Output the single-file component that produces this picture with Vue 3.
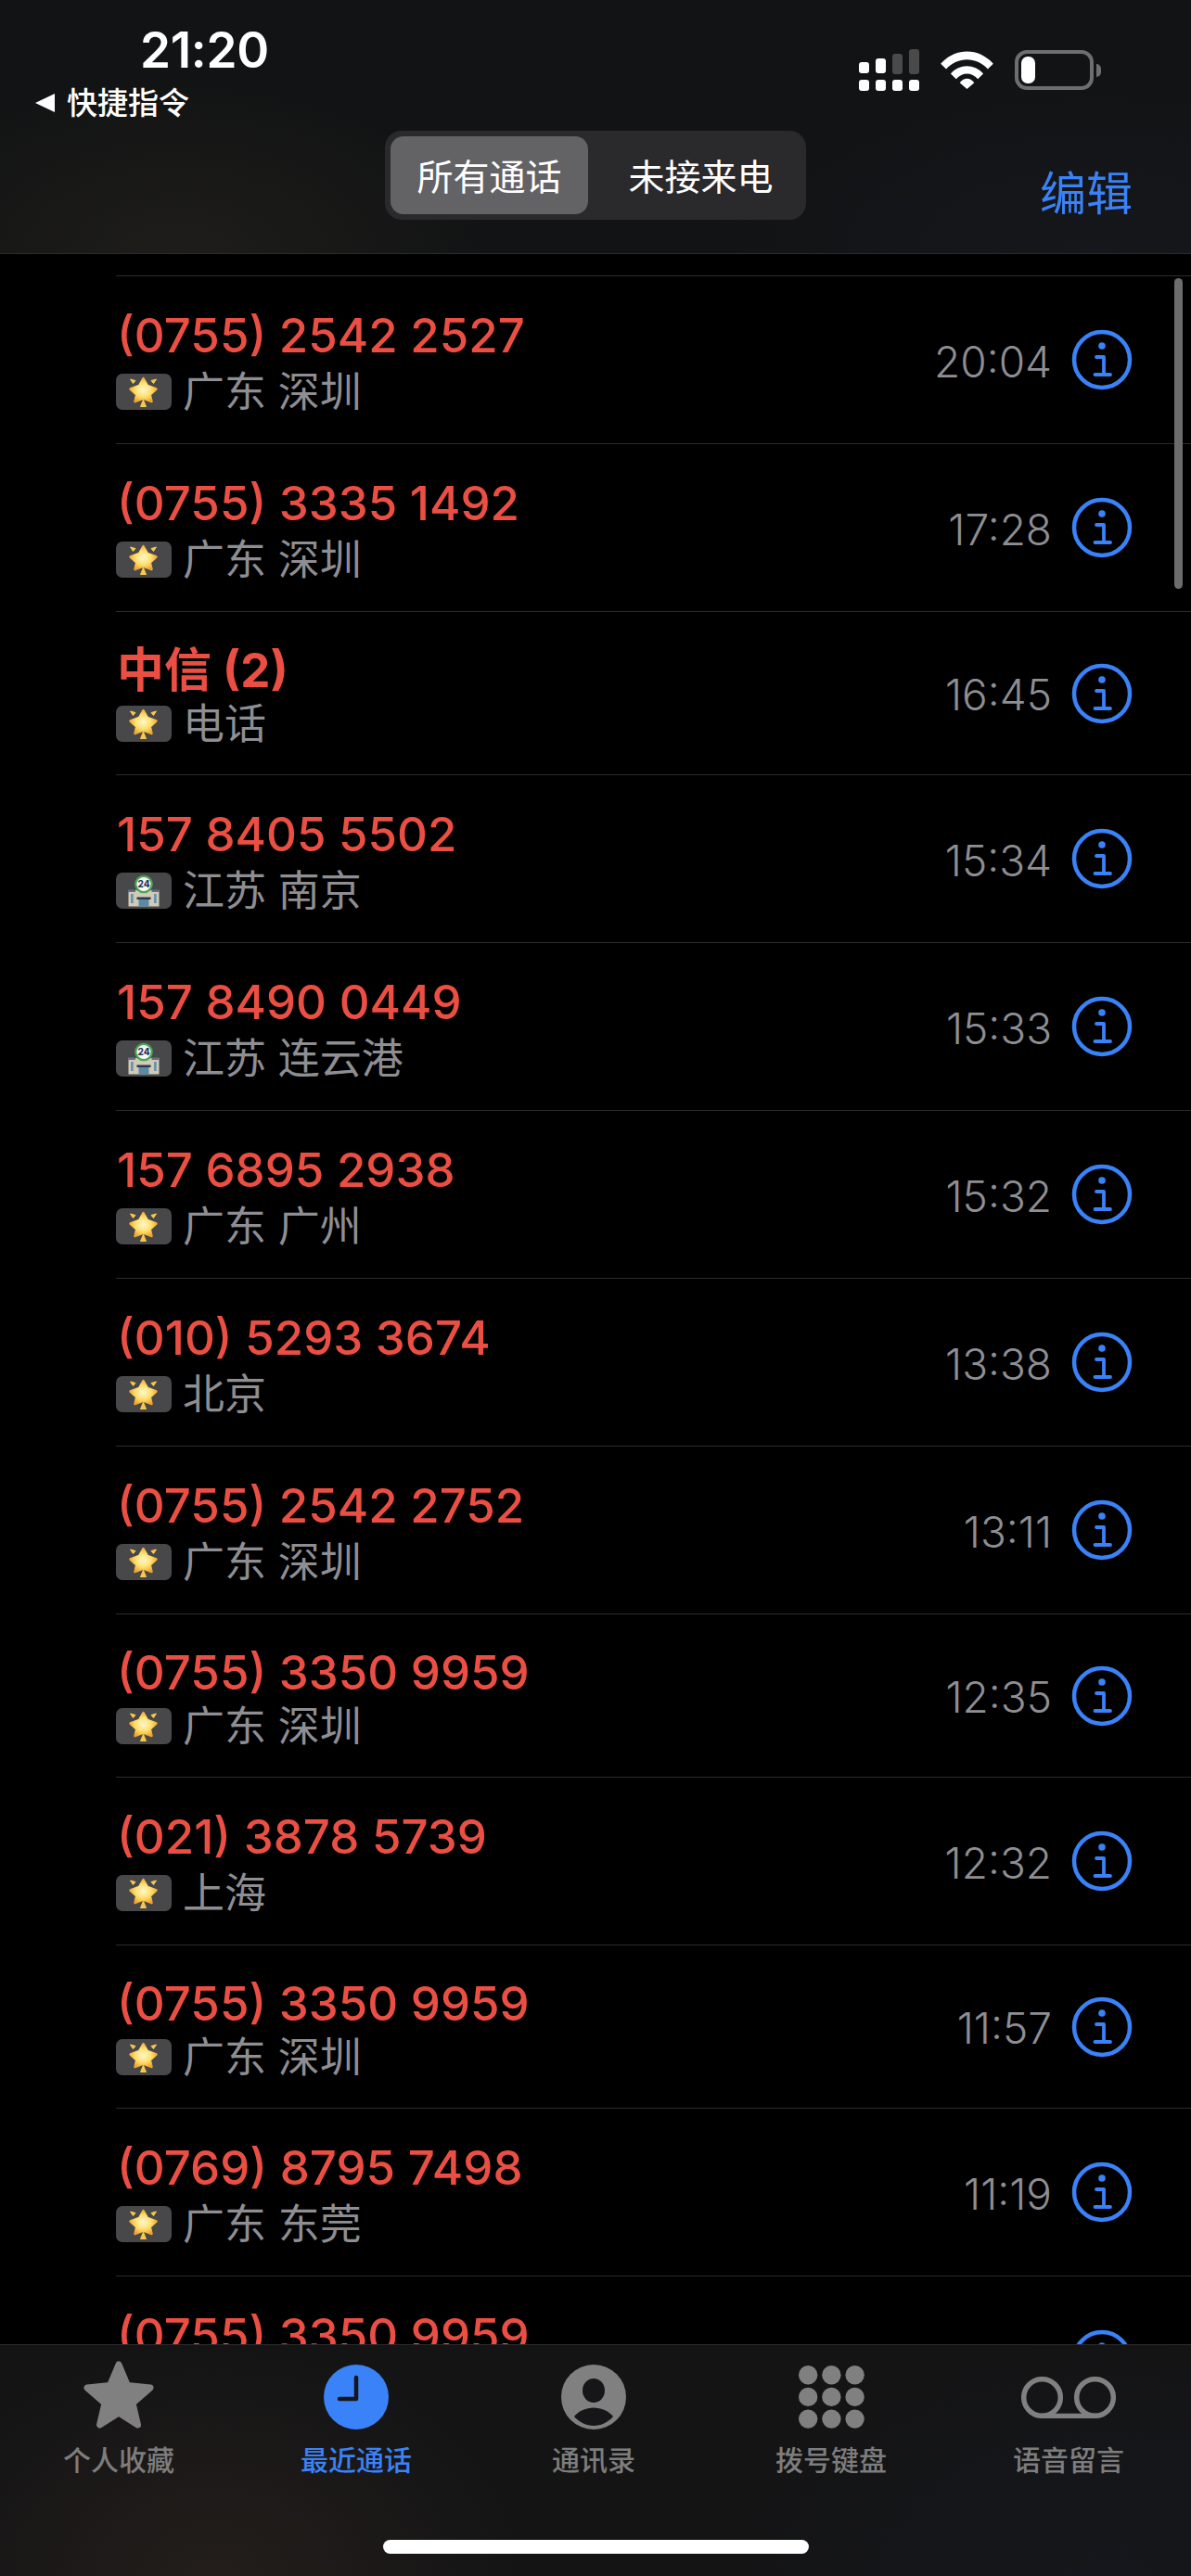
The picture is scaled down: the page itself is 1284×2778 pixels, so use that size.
<script setup>
const STAR = "star";
const SHOP = "shop";

const calls = [
  { name: "(0755) 2542 2527", place: "广东 深圳", time: "20:04", icon: STAR },
  { name: "(0755) 3335 1492", place: "广东 深圳", time: "17:28", icon: STAR },
  { name: "中信 (2)", place: "电话", time: "16:45", icon: STAR, short: true, cjk: true },
  { name: "157 8405 5502", place: "江苏 南京", time: "15:34", icon: SHOP },
  { name: "157 8490 0449", place: "江苏 连云港", time: "15:33", icon: SHOP },
  { name: "157 6895 2938", place: "广东 广州", time: "15:32", icon: STAR },
  { name: "(010) 5293 3674", place: "北京", time: "13:38", icon: STAR },
  { name: "(0755) 2542 2752", place: "广东 深圳", time: "13:11", icon: STAR },
  { name: "(0755) 3350 9959", place: "广东 深圳", time: "12:35", icon: STAR, short: true },
  { name: "(021) 3878 5739", place: "上海", time: "12:32", icon: STAR },
  { name: "(0755) 3350 9959", place: "广东 深圳", time: "11:57", icon: STAR, short: true },
  { name: "(0769) 8795 7498", place: "广东 东莞", time: "11:19", icon: STAR },
  { name: "(0755) 3350 9959", place: "广东 深圳", time: "10:42", icon: STAR }
];

const tabs = [
  { label: "个人收藏", icon: "favorites" },
  { label: "最近通话", icon: "recents", active: true },
  { label: "通讯录", icon: "contacts" },
  { label: "拨号键盘", icon: "keypad" },
  { label: "语音留言", icon: "voicemail" }
];

const keypadDots = [];
for (let row = 0; row < 3; row++) {
  for (let col = 0; col < 3; col++) {
    keypadDots.push({ cx: 10.2 + col * 25.2, cy: 10.2 + row * 23.7 });
  }
}
</script>

<template>
  <div class="phone">
    <svg class="defs" width="0" height="0">
      <defs>
        <radialGradient id="starFill" cx="0.5" cy="0.5" r="0.55">
          <stop offset="0" stop-color="#fff8cf" />
          <stop offset="0.55" stop-color="#ffdf6e" />
          <stop offset="1" stop-color="#efa42c" />
        </radialGradient>
      </defs>
    </svg>

    <header class="top-bar">
      <div class="status-row">
        <div class="status-left">
          <span class="clock">21:20</span>
          <span class="back-link"><i class="back-arrow"></i>快捷指令</span>
        </div>
        <div class="status-right">
          <svg class="signal" width="65" height="45" viewBox="0 0 65 45">
            <g fill="#fff">
              <rect x="0" y="14" width="11" height="12" rx="3" />
              <rect x="18" y="10" width="11" height="16" rx="3" />
              <rect x="0" y="33" width="11" height="12" rx="3" />
              <rect x="18" y="33" width="11" height="12" rx="3" />
              <rect x="36" y="33" width="11" height="12" rx="3" />
              <rect x="54" y="33" width="11" height="12" rx="3" />
            </g>
            <g fill="#4a4a4a">
              <rect x="36" y="5" width="11" height="22" rx="3" />
              <rect x="54" y="0" width="11" height="27" rx="3" />
            </g>
          </svg>
          <svg class="wifi" width="57" height="41" viewBox="0 0 58 42">
            <path d="M0 14 C16 -4 42 -4 58 14 L52 20 C39 6 19 6 6 20 Z" fill="#fff" />
            <path d="M11 25 C21 14 37 14 47 25 L41 31 C34 23 24 23 17 31 Z" fill="#fff" />
            <path d="M21 35 C26 29 32 29 37 35 L29 42 Z" fill="#fff" />
          </svg>
          <div class="battery">
            <div class="battery-body"><span class="battery-level"></span></div>
            <span class="battery-cap"></span>
          </div>
        </div>
      </div>
      <div class="nav-row">
        <div class="segments">
          <span class="segment selected">所有通话</span>
          <span class="segment">未接来电</span>
        </div>
        <span class="edit">编辑</span>
      </div>
    </header>

    <main class="call-list">
      <div
        v-for="(call, index) in calls"
        :key="index"
        class="call-row"
        :class="{ short: call.short }"
      >
        <div class="call-text">
          <div class="call-name" :class="{ cjk: call.cjk }">{{ call.name }}</div>
          <div class="call-place">
            <span class="tag">
              <svg v-if="call.icon === 'star'" width="60" height="39" viewBox="0 0 60 39">
                <path d="M15.5 6 L21 7.500 L18.500 10.500 Z M43.500 6 L38 7.500 L40.500 10.500 Z M29.500 28 L32.500 35.500 L26.500 35.500 Z" fill="#f6c94e" stroke="#f6c94e" stroke-width="1" stroke-linejoin="round" />
                <path d="M29.500 5 L33.800 12.800 L43.500 16.500 L36.800 22.500 L38.500 30 L29.500 26.500 L20.500 30 L22.200 22.500 L15.500 16.500 L25.200 12.800 Z" fill="url(#starFill)" stroke="url(#starFill)" stroke-width="2.500" stroke-linejoin="round" />
              </svg>
              <svg v-else width="60" height="39" viewBox="0 0 60 39">
                <rect x="13.500" y="19" width="33" height="17.500" fill="#cfcbb6" />
                <rect x="13" y="18.500" width="8" height="2.500" fill="#5f7186" />
                <rect x="38.500" y="18.500" width="8" height="2.500" fill="#5f7186" />
                <rect x="16" y="23" width="2.800" height="10" fill="#6f93ad" />
                <rect x="41" y="23" width="2.800" height="10" fill="#6f93ad" />
                <rect x="22.500" y="26.500" width="15" height="2.500" fill="#2e3557" />
                <rect x="24.500" y="29" width="11" height="7.500" fill="#5a8aa6" />
                <circle cx="30" cy="12.500" r="9.800" fill="#4aa552" />
                <circle cx="30" cy="12.500" r="7.600" fill="#f7f7f7" />
                <text x="30" y="16" text-anchor="middle" class="shop-num">24</text>
              </svg>
            </span>
            <span>{{ call.place }}</span>
          </div>
        </div>
        <span class="call-time">{{ call.time }}</span>
        <svg class="info" width="66" height="66" viewBox="0 0 66 66">
          <circle cx="33" cy="33" r="30" fill="none" stroke="#3a82f7" stroke-width="4.5" />
          <circle cx="33" cy="18" r="3.800" fill="#3a82f7" />
          <path d="M27 30 H35 V49 M25.500 49 H42" fill="none" stroke="#3a82f7" stroke-width="3.800" stroke-linecap="round" stroke-linejoin="round" />
        </svg>
      </div>
    </main>
    <span class="scroll-thumb"></span>

    <footer class="tab-bar">
      <div class="tabs">
        <div v-for="tab in tabs" :key="tab.label" class="tab" :class="{ active: tab.active }">
          <div class="tab-icon">
            <svg v-if="tab.icon === 'favorites'" class="star-icon" width="76" height="73" viewBox="0 0 76 73">
              <polygon points="38,4 47.500,26.500 72,29 53,45.500 58.500,69 38,56 17.500,69 23,45.500 4,29 28.500,26.500" fill="#808080" stroke="#808080" stroke-width="7" stroke-linejoin="round" />
            </svg>
            <svg v-else-if="tab.icon === 'recents'" width="70" height="70" viewBox="0 0 70 70">
              <circle cx="35" cy="35" r="35" fill="#3a82f7" />
              <path d="M35 14 V37 H17" fill="none" stroke="#161618" stroke-width="4.500" stroke-linecap="round" stroke-linejoin="round" />
            </svg>
            <svg v-else-if="tab.icon === 'contacts'" width="70" height="70" viewBox="0 0 70 70">
              <circle cx="35" cy="35" r="35" fill="#808080" />
              <ellipse cx="35" cy="28" rx="12" ry="13" fill="#161618" />
              <path d="M14 56 C19 50 27 46.500 35 46.500 C43 46.500 51 50 56 56 C51 62 43 66 35 66 C27 66 19 62 14 56 Z" fill="#161618" />
            </svg>
            <svg v-else-if="tab.icon === 'keypad'" width="71" height="68" viewBox="0 0 71 68">
              <circle v-for="(dot, i) in keypadDots" :key="i" :cx="dot.cx" :cy="dot.cy" r="10.200" fill="#808080" />
            </svg>
            <svg v-else width="102" height="45" viewBox="0 0 102 45">
              <path d="M22.500 42.500 H79.500" stroke="#808080" stroke-width="5.500" fill="none" />
              <circle cx="22.500" cy="22.500" r="19.800" stroke="#808080" stroke-width="5.500" fill="none" />
              <circle cx="79.500" cy="22.500" r="19.800" stroke="#808080" stroke-width="5.500" fill="none" />
            </svg>
          </div>
          <span class="tab-label">{{ tab.label }}</span>
        </div>
      </div>
    </footer>
    <span class="home-bar"></span>
  </div>
</template>

<style>
html,
body {
  background: #000;
}
</style>

<style scoped>
.phone {
  background: #000;
  color: #fff;
  display: flex;
  flex-direction: column;
  font-family: Inter, "Noto Sans CJK SC", sans-serif;
  height: 2778px;
  overflow: hidden;
  position: relative;
  width: 1284px;
}

.defs {
  position: absolute;
}

.top-bar {
  background:
    radial-gradient(ellipse 340px 190px at 190px 100%, #1e1d1a, transparent),
    radial-gradient(ellipse 420px 200px at 1180px 100%, #15171c, transparent),
    #121314;
  border-bottom: 1px solid #2c2c2e;
  box-sizing: border-box;
  flex: 0 0 274px;
}

.status-row {
  box-sizing: border-box;
  display: flex;
  height: 141px;
  justify-content: space-between;
  padding: 25px 97px 0 38px;
}

.status-left {
  display: flex;
  flex-direction: column;
}

.clock {
  font-size: 53px;
  font-weight: 600;
  letter-spacing: -0.3px;
  line-height: 58px;
  margin-left: 113px;
}

.back-link {
  align-items: center;
  display: flex;
  font-size: 33px;
  font-weight: 500;
  gap: 13px;
  line-height: 44px;
  margin-top: 6px;
}

.back-arrow {
  border-bottom: 10px solid transparent;
  border-right: 21px solid #fff;
  border-top: 10px solid transparent;
  display: block;
  height: 0;
  width: 0;
}

.status-right {
  align-items: flex-end;
  display: flex;
  gap: 23px;
  height: 73px;
}

.wifi {
  margin-bottom: 2px;
}

.battery {
  align-items: center;
  display: flex;
  gap: 3px;
  margin-bottom: 1px;
}

.battery-body {
  border: 4px solid #6e6e6e;
  border-radius: 13px;
  box-sizing: border-box;
  height: 43px;
  padding: 3px;
  width: 85px;
}

.battery-level {
  background: #fff;
  border-radius: 7px;
  display: block;
  height: 100%;
  width: 15px;
}

.battery-cap {
  background: #6e6e6e;
  border-radius: 0 6px 6px 0;
  display: block;
  height: 14px;
  width: 5px;
}

.nav-row {
  align-items: flex-start;
  display: flex;
  justify-content: center;
  position: relative;
}

.segments {
  background: #2a2a2c;
  border-radius: 18px;
  box-sizing: border-box;
  display: flex;
  height: 96px;
  padding: 6px;
  width: 454px;
}

.segment {
  align-items: center;
  border-radius: 14px;
  display: flex;
  flex: 1;
  font-size: 39px;
  justify-content: center;
  padding: 0 0 2px 14px;
}

.segment.selected {
  background: #636366;
  flex: 0 0 213px;
  padding-left: 0;
}

.edit {
  color: #3a82f7;
  font-size: 50px;
  position: absolute;
  right: 63px;
  top: 28px;
}

.call-list {
  flex: 1;
  min-height: 0;
  overflow: hidden;
  padding-top: 23px;
}

.call-row {
  align-items: center;
  border-top: 1px solid #2c2c2e;
  box-sizing: border-box;
  display: flex;
  height: 181px;
  margin-left: 125px;
  padding-right: 63px;
}

.call-row.short {
  height: 176px;
}

.call-text {
  flex: 1;
  min-width: 0;
  padding-top: 7px;
}

.call-name {
  color: #eb4f43;
  font-size: 51px;
  font-weight: 500;
  line-height: 62px;
  padding-left: 1px;
}

.call-name.cjk {
  font-weight: 700;
}

.short .call-name {
  margin-bottom: -3px;
}

.call-place {
  align-items: center;
  color: #8e8e93;
  display: flex;
  font-size: 45px;
  gap: 12px;
  line-height: 60px;
}

.tag {
  align-items: center;
  background: #48484a;
  border-radius: 7px;
  display: flex;
  height: 39px;
  justify-content: center;
  overflow: hidden;
  width: 60px;
}

.shop-num {
  fill: #2e3557;
  font-family: Inter, sans-serif;
  font-size: 10px;
  font-weight: 800;
}

.call-time {
  color: #8e8e93;
  font-size: 46px;
  font-weight: 300;
  margin-right: 21px;
  margin-top: 3px;
}

.info {
  flex: none;
}

.scroll-thumb {
  background: #6c6c6c;
  border-radius: 5px;
  height: 335px;
  position: absolute;
  right: 9px;
  top: 300px;
  width: 9px;
}

.tab-bar {
  background:
    radial-gradient(ellipse 340px 250px at 230px 100%, #231e1b, transparent),
    radial-gradient(ellipse 420px 250px at 1200px 100%, #15171c, transparent),
    #141415;
  border-top: 1px solid #2c2c2e;
  box-sizing: border-box;
  flex: 0 0 250px;
}

.tabs {
  display: flex;
  padding: 16px 4px 0 0;
}

.tab {
  align-items: center;
  color: #7d7d7d;
  display: flex;
  flex: 1;
  flex-direction: column;
  font-size: 30px;
  font-weight: 500;
}

.tab.active {
  color: #3a82f7;
}

.tab-icon {
  align-items: center;
  display: flex;
  height: 80px;
  justify-content: center;
}

.star-icon {
  margin-bottom: 5px;
}

.tab-label {
  line-height: 40px;
  margin-top: 8px;
}

.home-bar {
  background: #fff;
  border-radius: 8px;
  bottom: 24px;
  height: 15px;
  left: 413px;
  position: absolute;
  width: 459px;
}
</style>
